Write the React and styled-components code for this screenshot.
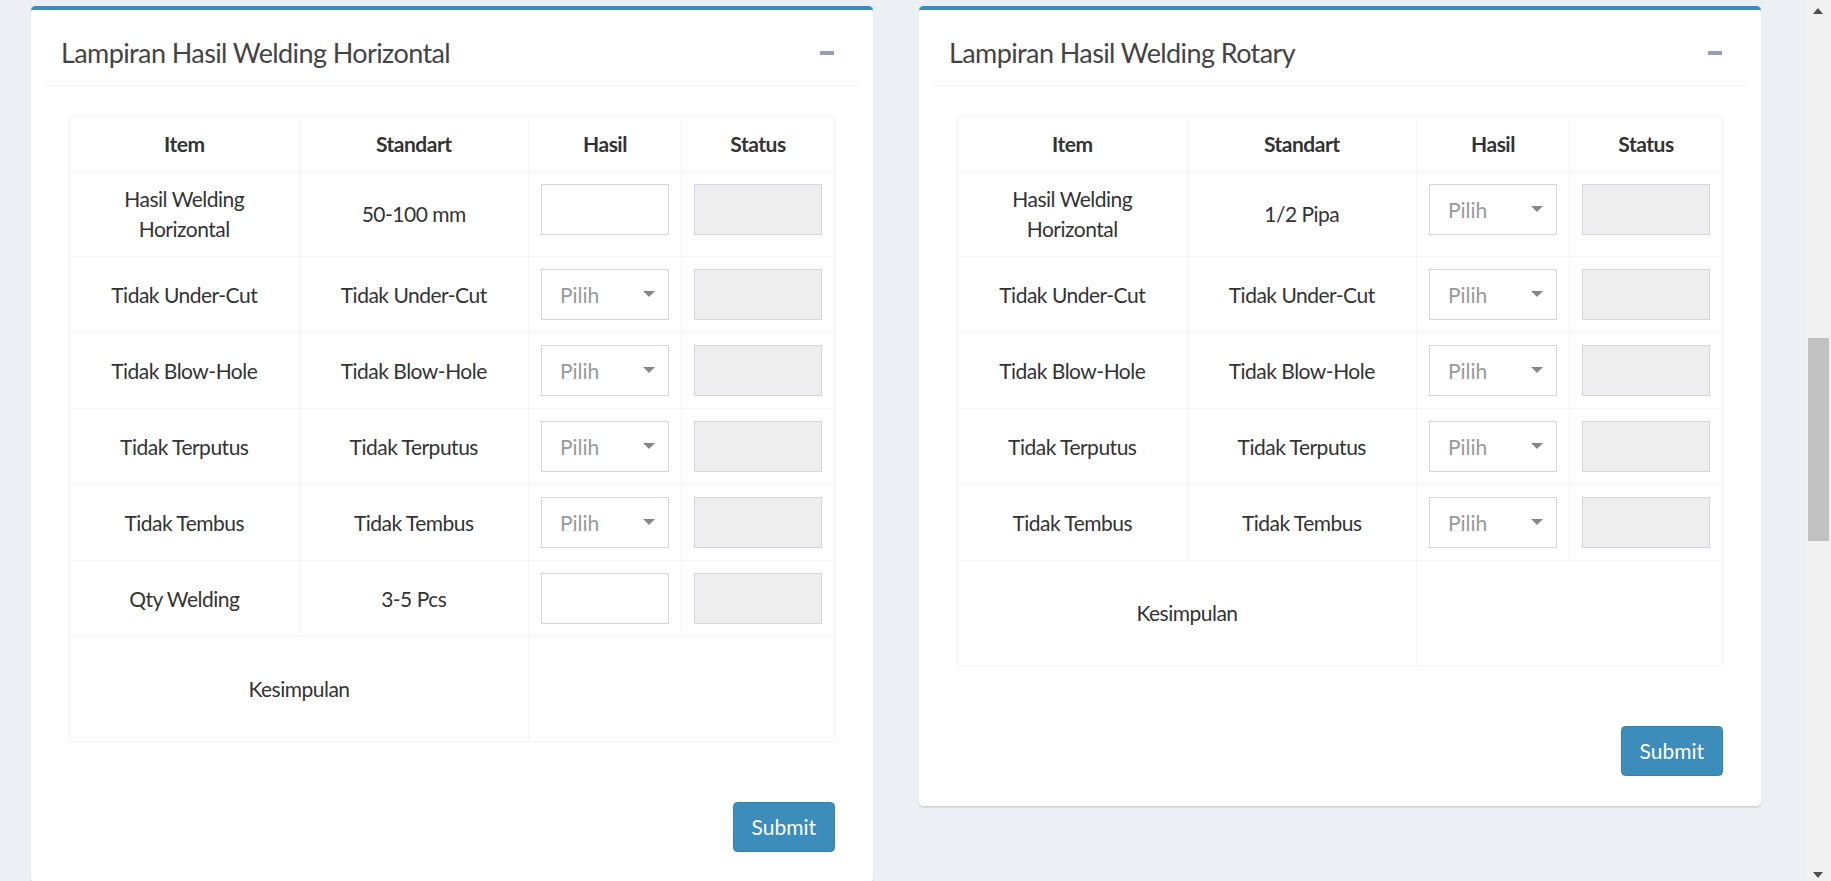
import styled, { createGlobalStyle } from "styled-components";

const GlobalStyle = createGlobalStyle`
  body {
    margin: 0;
    background: #ecf0f5;
    font-family: "Lato", "Liberation Sans", sans-serif;
    font-size: 21px;
    letter-spacing: -0.5px;
    color: #333;
  }
  * {
    box-sizing: border-box;
  }
`;

const Page = styled.div`
  display: flex;
  align-items: flex-start;
  gap: 46px;
  padding: 6px 70px 30px 31px;
`;

const Card = styled.section`
  flex: 1;
  background: #fff;
  border-top: 4.5px solid #3c8dbc;
  border-radius: 4.5px;
  box-shadow: 0 1.5px 1.5px rgba(0, 0, 0, 0.1);
  padding: 0 15px;
`;

const Header = styled.div`
  display: flex;
  align-items: center;
  justify-content: space-between;
  padding: 29px 15px 19px;
  border-bottom: 1px solid #f4f4f4;
`;

const Title = styled.h3`
  margin: 0;
  font-size: 27px;
  font-weight: 400;
  line-height: 27px;
  letter-spacing: -0.6px;
  color: #444;
`;

const Collapse = styled.button`
  width: 14px;
  height: 4px;
  margin-right: 9px;
  padding: 0;
  border: 0;
  background: #97a0b3;
  cursor: pointer;
`;

const Body = styled.div`
  display: flex;
  flex-direction: column;
  padding: 30px 23px 30px;
`;

const Table = styled.table`
  width: 100%;
  border-collapse: collapse;
  border: 1px solid #f4f4f4;
  table-layout: fixed;
  margin-bottom: 60px;
`;

const Th = styled.th`
  padding: 12px;
  line-height: 30px;
  font-weight: 700;
  text-align: center;
  border: 1px solid #f4f4f4;
`;

const Td = styled.td`
  padding: 12px;
  line-height: 30px;
  text-align: center;
  vertical-align: ${(p) => (p.$field ? "top" : "middle")};
  border: 1px solid #f4f4f4;
  height: ${(p) => (p.$tall ? "105px" : "auto")};
`;

const Input = styled.input`
  display: block;
  width: 100%;
  height: 51px;
  padding: 9px 18px;
  border: 1px solid #d2d6de;
  border-radius: 0;
  font: inherit;
  color: #555;
  background: ${(p) => (p.readOnly ? "#eee" : "#fff")};
  outline: none;
`;

const SelectWrap = styled.div`
  position: relative;
`;

const Select = styled.select`
  display: block;
  width: 100%;
  height: 51px;
  padding: 0 18px;
  border: 1px solid #d2d6de;
  border-radius: 0;
  font: inherit;
  color: #999;
  background: #fff;
  appearance: none;
  outline: none;
`;

const Caret = styled.span`
  position: absolute;
  right: 14px;
  top: 22px;
  border-left: 6px solid transparent;
  border-right: 6px solid transparent;
  border-top: 6px solid #888;
  pointer-events: none;
`;

const Footer = styled.div`
  display: flex;
  justify-content: flex-end;
`;

const SubmitButton = styled.button`
  padding: 9px 18px;
  border: 1px solid #367fa9;
  border-radius: 4.5px;
  background: #3c8dbc;
  color: #fff;
  font: inherit;
  line-height: 30px;
  cursor: pointer;
`;

/* stand-in for the browser scrollbar seen in the screenshot */
const ScrollRail = styled.div`
  position: fixed;
  top: 0;
  right: 0;
  bottom: 0;
  width: 25px;
  background: #f1f1f1;
`;

const ScrollThumb = styled.div`
  position: absolute;
  left: 2px;
  right: 2px;
  top: 338px;
  height: 203px;
  background: #c1c1c1;
`;

const ScrollArrow = styled.span`
  position: absolute;
  left: 7px;
  ${(p) => (p.$down ? "bottom: 3px;" : "top: 8px;")}
  border-left: 5.5px solid transparent;
  border-right: 5.5px solid transparent;
  ${(p) => (p.$down ? "border-top" : "border-bottom")}: 6px solid #505050;
`;

const horizontalRows = [
  { item: "Hasil Welding Horizontal", standard: "50-100 mm", type: "text" },
  { item: "Tidak Under-Cut", standard: "Tidak Under-Cut", type: "select" },
  { item: "Tidak Blow-Hole", standard: "Tidak Blow-Hole", type: "select" },
  { item: "Tidak Terputus", standard: "Tidak Terputus", type: "select" },
  { item: "Tidak Tembus", standard: "Tidak Tembus", type: "select" },
  { item: "Qty Welding", standard: "3-5 Pcs", type: "text" },
];

const rotaryRows = [
  { item: "Hasil Welding Horizontal", standard: "1/2 Pipa", type: "select" },
  { item: "Tidak Under-Cut", standard: "Tidak Under-Cut", type: "select" },
  { item: "Tidak Blow-Hole", standard: "Tidak Blow-Hole", type: "select" },
  { item: "Tidak Terputus", standard: "Tidak Terputus", type: "select" },
  { item: "Tidak Tembus", standard: "Tidak Tembus", type: "select" },
];

function HasilField({ type }) {
  if (type === "text") return <Input type="text" />;
  return (
    <SelectWrap>
      <Select defaultValue="">
        <option value="">Pilih</option>
        <option value="OK">OK</option>
        <option value="NG">NG</option>
      </Select>
      <Caret />
    </SelectWrap>
  );
}

function WeldingCard({ title, rows }) {
  return (
    <Card>
      <Header>
        <Title>{title}</Title>
        <Collapse aria-label="collapse" />
      </Header>
      <Body>
        <Table>
          <colgroup>
            <col style={{ width: "30%" }} />
            <col style={{ width: "30%" }} />
            <col style={{ width: "20%" }} />
            <col style={{ width: "20%" }} />
          </colgroup>
          <thead>
            <tr>
              <Th>Item</Th>
              <Th>Standart</Th>
              <Th>Hasil</Th>
              <Th>Status</Th>
            </tr>
          </thead>
          <tbody>
            {rows.map((row) => (
              <tr key={row.item}>
                <Td>{row.item}</Td>
                <Td>{row.standard}</Td>
                <Td $field>
                  <HasilField type={row.type} />
                </Td>
                <Td $field>
                  <Input type="text" readOnly />
                </Td>
              </tr>
            ))}
            <tr>
              <Td colSpan={2} $tall>
                Kesimpulan
              </Td>
              <Td colSpan={2} $tall />
            </tr>
          </tbody>
        </Table>
        <Footer>
          <SubmitButton type="button">Submit</SubmitButton>
        </Footer>
      </Body>
    </Card>
  );
}

export default function App() {
  return (
    <>
      <GlobalStyle />
      <Page>
        <WeldingCard title="Lampiran Hasil Welding Horizontal" rows={horizontalRows} />
        <WeldingCard title="Lampiran Hasil Welding Rotary" rows={rotaryRows} />
      </Page>
      <ScrollRail>
        <ScrollArrow />
        <ScrollThumb />
        <ScrollArrow $down />
      </ScrollRail>
    </>
  );
}
